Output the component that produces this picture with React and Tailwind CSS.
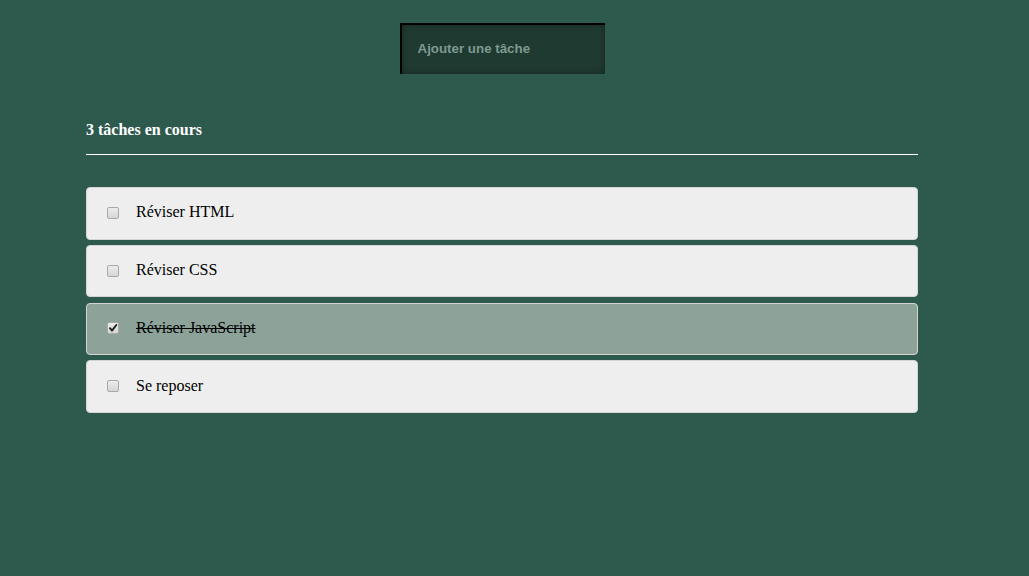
import { useState } from 'react';

const initialTasks = [
  { id: 1, label: 'Réviser HTML', done: false },
  { id: 2, label: 'Réviser CSS', done: false },
  { id: 3, label: 'Réviser JavaScript', done: true },
  { id: 4, label: 'Se reposer', done: false },
];

// old-style gray checkbox, like the one in the screenshot
const Check = ({ checked, onChange }) => (
  <span className="relative w-[12px] h-[12px] shrink-0 mt-[1px]">
    <input
      type="checkbox"
      checked={checked}
      onChange={onChange}
      className="appearance-none block w-[12px] h-[12px] m-0 rounded-[2px] border border-[#a9a9a9] bg-gradient-to-b from-[#ececec] to-[#d6d6d6]"
    />
    {checked && (
      <svg viewBox="0 0 12 12" className="absolute inset-0 w-[12px] h-[12px] pointer-events-none">
        <path d="M3 6.2 L5 8.6 L9.3 3" fill="none" stroke="#222" strokeWidth="2" strokeLinecap="round" strokeLinejoin="round" />
      </svg>
    )}
  </span>
);

const App = () => {
  const [tasks, setTasks] = useState(initialTasks);
  const [text, setText] = useState('');

  const toggle = (id) => {
    setTasks(tasks.map(t => (t.id === id ? { ...t, done: !t.done } : t)));
  };

  const remaining = tasks.length - tasks.filter(t => t.done).length;

  return (
    <div className="min-h-[576px] bg-[#2e5a4d] font-['Liberation_Serif',serif] pt-[23px]">
      <div className="w-[1004px]">
        <div className="flex justify-center">
          <input
            type="text"
            value={text}
            onChange={(e) => setText(e.target.value)}
            placeholder="Ajouter une tâche"
            className="w-[205px] h-[51px] bg-[#1f3a31] border-t-2 border-l-2 border-black pl-[16px] pb-[2px] text-[13.33px] font-bold font-['Liberation_Sans',sans-serif] text-[#8aa39a] placeholder:text-[#7d9990] outline-none shadow-[inset_0_0_6px_rgba(0,0,0,0.35)]"
          />
        </div>

        <div className="mx-auto w-[832px] mt-[46px]">
          <h2 className="text-white font-bold text-[16px] leading-[20px]">{remaining} tâches en cours</h2>
          <div className="h-px bg-white mt-[14px]" />

          <ul className="mt-[32px] flex flex-col gap-[5.3px]">
            {tasks.map(task => (
              <li
                key={task.id}
                className={`h-[52.5px] flex items-center rounded-[4px] border border-[#d4d4d4] pl-[20px] pb-[2px] ${
                  task.done ? 'bg-[#8da399]' : 'bg-[#eeeeee]'
                }`}
              >
                <Check checked={task.done} onChange={() => toggle(task.id)} />
                <span className={`ml-[17px] text-[16px] text-black ${task.done ? 'line-through' : ''}`}>
                  {task.label}
                </span>
              </li>
            ))}
          </ul>
        </div>
      </div>
    </div>
  );
};

export default App;
